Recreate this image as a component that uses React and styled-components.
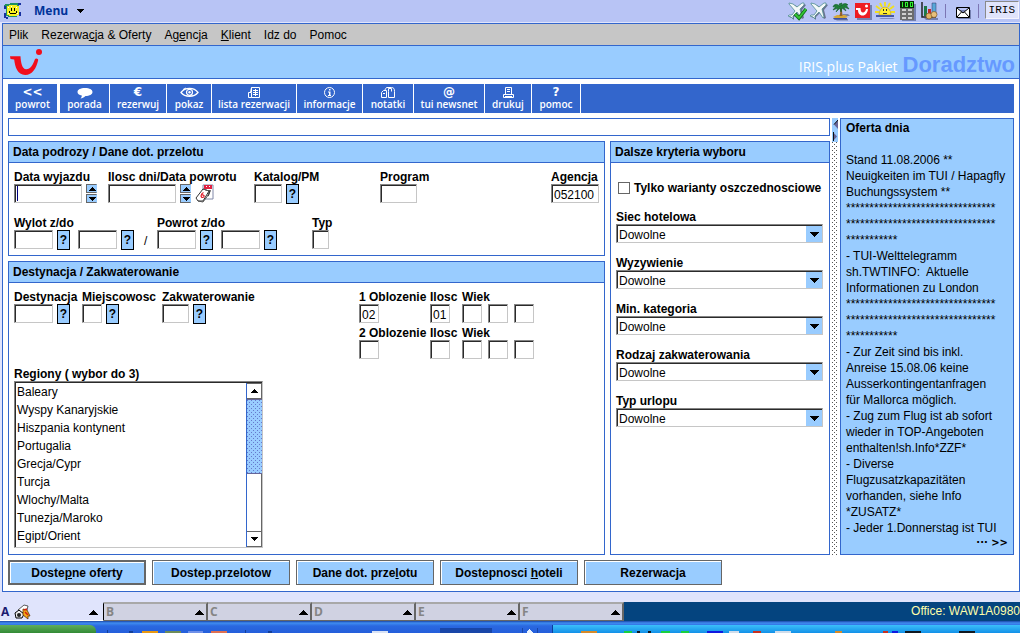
import React from "react";
import styled, { createGlobalStyle, css } from "styled-components";

const c = {
  line: "#3366cc",
  sky: "#99ccff",
  pale: "#e0e4fc",
  lilac: "#b8c4f5",
  grey: "#c6c6c6",
  dark: "#666666",
};

const Global = createGlobalStyle`
  *, *::before, *::after { box-sizing: border-box; }
  html, body { margin: 0; background: ${c.pale}; }
  body, button, input, select {
    font: 12px/14px "Liberation Sans", Arial, sans-serif;
    color: #000;
  }
  button { padding: 0; margin: 0; border: 0; border-radius: 0; cursor: pointer; }
  svg { display: block; flex: none; }
`;

const Page = styled.div`
  min-height: 100vh;
  display: flex;
  flex-direction: column;
`;

/* ---- top bar ---- */

const TopBar = styled.header`
  height: 23px;
  display: flex;
  align-items: center;
  justify-content: space-between;
  background: ${c.lilac};
  border-bottom: 1px solid ${c.pale};
  padding-left: 3px;
`;

const MenuButton = styled.button`
  display: flex;
  align-items: center;
  gap: 8px;
  background: none;
  color: #003399;
  font: bold 12px/16px "Open Sans", sans-serif;
`;

const MenuLabel = styled.span`
  padding-left: 4px;
`;

const Tools = styled.div`
  display: flex;
  align-items: center;
  gap: 2px;
`;

const ToolButton = styled.button`
  width: 20px;
  height: 20px;
  background: none;
`;

const ToolDivider = styled.span`
  width: 1px;
  height: 14px;
  margin: 0 4px;
  background: #7c76b4;
`;

const IrisBox = styled.span`
  height: 18px;
  margin-bottom: 2px;
  margin-right: 1px;
  padding: 0 3px;
  border: 1px solid;
  border-color: #8a8a8a #f4f4ff #f4f4ff #8a8a8a;
  background: ${c.pale};
  font: 11px/16px "Liberation Mono", monospace;
`;

/* ---- application window ---- */

const Window = styled.div`
  margin-left: 2px;
  border: 1px solid ${c.line};
  background: #fff;
`;

const MenuBar = styled.nav`
  height: 22px;
  display: flex;
  align-items: center;
  gap: 13px;
  padding-left: 6px;
  background: ${c.grey};
  border-bottom: 1px solid ${c.line};
`;

const MenuItem = styled.a`
  color: #000;
  text-decoration: none;
`;

const Banner = styled.div`
  height: 33px;
  display: flex;
  align-items: center;
  justify-content: space-between;
  padding: 0 4px 0 7px;
  background: ${c.sky};
  border-bottom: 1px solid ${c.line};
`;

const Product = styled.div`
  display: flex;
  align-items: baseline;
  gap: 5px;
  padding-top: 8px;
  color: #fff;
  font: 14px/24px "Open Sans", sans-serif;
`;

const Module = styled.strong`
  color: #6699ff;
  font: bold 22px/24px "Liberation Sans", Arial, sans-serif;
`;

const Content = styled.div`
  display: grid;
  gap: 5px;
  padding: 5px 5px 6px;
`;

const Toolbar = styled.div`
  height: 29px;
  display: flex;
  background: ${c.line};
`;

const Action = styled.button`
  flex: 0 0 ${(p) => p.$width}px;
  display: flex;
  flex-direction: column;
  align-items: center;
  justify-content: space-between;
  padding: 2px 0 3px;
  background: ${c.line};
  border-right: ${(p) => (p.$wide ? 3 : 1)}px solid #fff;
  color: #fff;
  font: 600 10px/11px "Open Sans", sans-serif;
  white-space: nowrap;
`;

const Glyph = styled.span`
  height: 13px;
  font: bold 12px/12px "DejaVu Sans", sans-serif;
`;

const Columns = styled.div`
  display: grid;
  grid-template-columns: minmax(0, 1fr) 6px 174px;
  gap: 2px;
`;

const Work = styled.div`
  display: grid;
  grid-template-columns: minmax(0, 1fr) 220px;
  gap: 5px;
`;

const Message = styled.div`
  grid-column: 1 / -1;
  height: 18px;
  border: 1px solid ${c.line};
`;

const Stack = styled.div`
  display: grid;
  gap: 5px;
`;

const Panel = styled.section`
  border: 1px solid ${c.line};
`;

const PanelTitle = styled.h2`
  margin: 0;
  padding: 0 4px;
  font-size: 12px;
  line-height: 20px;
  background: ${c.sky};
  border-bottom: 1px solid ${c.line};
`;

const PanelBody = styled.div`
  display: grid;
  gap: ${(p) => p.$gap || 0}px;
  padding: 7px 5px 5px;
`;

const FieldRow = styled.div`
  display: flex;
  align-items: flex-start;
`;

const Field = styled.div`
  width: ${(p) => (p.$width ? p.$width + "px" : "auto")};
  margin-left: ${(p) => (p.$end ? "auto" : 0)};
`;

const Label = styled.label`
  display: block;
  height: 14px;
  font-weight: bold;
  white-space: nowrap;
`;

const Controls = styled.div`
  display: flex;
  gap: 4px;
  height: 20px;
`;

const Slot = styled.span`
  display: flex;
  padding-left: 2px;
`;

const sunken = css`
  border: 1px solid;
  border-color: #848484 ${c.grey} ${c.grey} #848484;
  box-shadow: inset 1px 1px 0 #2a2a2a;
  background-color: #fff;
`;

const TextBox = styled.input`
  ${sunken}
  width: ${(p) => p.$width}px;
  height: 19px;
  padding: 2px 0 0 2px;
  outline: 0;
  border-radius: 0;
  ${(p) =>
    p.$caret &&
    css`
      background: linear-gradient(#000080, #000080) 2px 1px / 1px 15px no-repeat #fff;
    `}
`;

const HelpButton = styled.button`
  width: 13px;
  height: 20px;
  margin-right: ${(p) => (p.$spaced ? 4 : 0)}px;
  border: 1px solid #000;
  background: ${c.sky};
  font-weight: bold;
`;

const Slash = styled.span`
  padding: 4px 0 0 6px;
`;

const Spinner = styled.div`
  display: grid;
  gap: 1px;
  height: 19px;
`;

const SpinButton = styled.button`
  width: 11px;
  height: 9px;
  display: grid;
  place-items: center;
  border: 1px solid ${c.dark};
  border-right-color: ${c.sky};
  background: ${c.sky};
`;

const IconButton = styled.button`
  height: 19px;
  background: none;
`;

const Destination = styled.div`
  display: grid;
  grid-template-columns: 345px 1fr;
`;

const Occupancy = styled.div`
  display: grid;
  align-content: start;
  gap: 2px;
`;

const Regions = styled.div`
  padding: 43px 0 1px;
`;

const ListFrame = styled.div`
  ${sunken}
  display: flex;
  width: 249px;
  height: 167px;
  padding: 1px 0 0 1px;
`;

const List = styled.select`
  flex: 1;
  min-width: 0;
  padding: 0;
  border: 0;
  border-radius: 0;
  outline: 0;
  overflow: hidden;
  background: transparent;

  option {
    height: 18px;
    min-height: 18px;
    padding: 2px 0 0 1px;
    line-height: 16px;
  }
`;

const dots = (color) => css`
  background-image: conic-gradient(at 1px 1px, transparent 75%, ${color} 0),
    conic-gradient(at 1px 1px, transparent 75%, ${color} 0);
  background-size: 4px 4px;
  background-position: 0 0, 2px 2px;
`;

const ScrollBar = styled.div`
  width: 16px;
  display: flex;
  flex-direction: column;
  border-left: 1px solid ${c.line};
`;

const ScrollButton = styled.button`
  height: 16px;
  display: grid;
  place-items: center;
  border: 1px solid ${c.dark};
  border-left: 0;
  background: #fff;
`;

const Thumb = styled.div`
  height: 75px;
  border-bottom: 1px solid #666699;
  border-top: 1px solid #666699;
  background-color: ${c.sky};
  ${dots("#6678cc")}
`;

const Track = styled.div`
  flex: 1;
  border-right: 1px solid ${c.dark};
`;

const CheckRow = styled.label`
  display: flex;
  align-items: center;
  gap: 4px;
  height: 14px;
  margin: 11px 0 15px 2px;
  font-weight: bold;
  white-space: nowrap;
`;

const CheckBox = styled.input`
  appearance: none;
  width: 12px;
  height: 12px;
  margin: 0;
  border: 1px solid ${c.dark};
  background: #fff;
  &:checked { background: ${c.line}; }
`;

const Criteria = styled.div`
  display: grid;
  gap: 13px;
`;

const SelectFrame = styled.div`
  ${sunken}
  display: grid;
  grid-template-columns: 1fr 16px;
  height: 19px;
  margin-right: 1px;
`;

const Select = styled.select`
  grid-area: 1 / 1 / 2 / 3;
  appearance: none;
  padding: 2px 18px 0 2px;
  border: 0;
  outline: 0;
  background: transparent;
`;

const SelectArrow = styled.span`
  grid-area: 1 / 2;
  display: grid;
  place-items: center;
  margin-top: 1px;
  background: ${c.sky};
  pointer-events: none;
`;

const Divider = styled.div`
  display: flex;
  flex-direction: column;
`;

const DividerArrows = styled.div`
  height: 24px;
  display: grid;
  align-content: space-around;
  justify-items: end;
  background: ${c.sky};
`;

const DividerGrip = styled.div`
  flex: 1;
  ${dots("#555555")}
`;

const News = styled.aside`
  border: 1px solid ${c.line};
  background: ${c.sky};
  padding: 1px 5px 4px;
  overflow: hidden;
`;

const NewsTitle = styled.h2`
  margin: 0 0 16px;
  font-size: 12px;
  line-height: 16px;
`;

const NewsText = styled.p`
  margin: 0;
  line-height: 16px;
  white-space: pre;
`;

const More = styled.a`
  display: block;
  height: 14px;
  color: #000;
  text-align: right;
  text-decoration: none;
  font: bold 10px/14px "DejaVu Sans", sans-serif;
`;

const Buttons = styled.div`
  display: flex;
  gap: 6px;
`;

const CommandButton = styled.button`
  width: 138px;
  height: 25px;
  border: 1px solid ${c.dark};
  border-width: ${(p) => (p.$default ? "2px" : "1px")};
  box-shadow: inset 1px 1px 0 #fff;
  background: ${c.sky};
  font-weight: bold;
`;

/* ---- session tabs and desktop bar ---- */

const Tabs = styled.div`
  display: flex;
  margin-top: 10px;
  height: 19px;
  background: #04447f;
`;

const Tab = styled.button`
  flex: 0 0 104px;
  display: flex;
  align-items: center;
  gap: 5px;
  padding: 0 2px;
  background: #d0d2e2;
  border-top: 2px solid #a8a8a8;
  border-right: 2px solid ${c.dark};
  border-bottom: 1px solid ${c.dark};
  color: #858585;
  font: bold 12px/14px "Open Sans", sans-serif;

  svg:last-child { margin-left: auto; }

  ${(p) =>
    p.$active &&
    css`
      padding: 0 5px 0 1px;
      background: ${c.pale};
      border-color: ${c.pale} #000 #fff;
      border-right-width: 1px;
      color: #1a1a70;
    `}
`;

const Office = styled.span`
  margin-left: auto;
  color: #ffffaa;
  line-height: 19px;
`;

const TaskBar = styled.footer`
  flex: 1;
  min-height: 12px;
  display: flex;
  align-items: flex-end;
  overflow: hidden;
  background: linear-gradient(#1b48a8 0, #3f8cf0 2px, #2a68e0 5px, #245edb 12px);
`;

const Start = styled.div`
  width: 96px;
  height: 8px;
  border-radius: 0 6px 0 0;
  background: linear-gradient(#5fae5c, #338a35);
`;

const Tray = styled.div`
  flex: 1;
  height: 8px;
  border-left: 1px solid #0b3f9c;
  background: linear-gradient(#3cc0fa, #1290e8);
`;

/* ---- drawings ---- */

const Triangle = ({ w = 10, h = 5, down }) => (
  <svg width={w} height={h} viewBox="0 0 10 5" preserveAspectRatio="none" shapeRendering="crispEdges">
    <path d={down ? "M0 0h10L5 5z" : "M0 5h10L5 0z"} fill="#000" />
  </svg>
);

const Smiley = () => (
  <svg width="19" height="17" viewBox="0 0 19 17" shapeRendering="crispEdges">
    <path d="M2 1h5V0h8v1h1v3h-1v7h-1v3H5v-1H3V4H1V2z" fill="#209060" />
    <path d="M1 3h2v3H1zM1 10h2v5H1zM16 9h2v4h-2zM15 0h3v2h-3zM3 14h2v2H3z" fill="#1830a0" />
    <path d="M6 2h8v1h2v9h-2v1H6v-1H4V3h2z" fill="#f8f020" />
    <path d="M5 4h1v1H5zM8 3h1v1H8zM13 4h1v1h-1zM5 10h1v1H5zM14 10h1v1h-1z" fill="#fff" />
    <path d="M8 5h1v3H8zM11 5h1v3h-1zM6 8h1v2H6zM7 10h6v1H7zM13 8h1v2h-1z" fill="#000" />
  </svg>
);

const TuiLogo = () => (
  <svg width="34" height="28" viewBox="0 0 34 28">
    <circle cx="29" cy="4" r="3" fill="#f10e1c" />
    <path d="M0 8.3h10.5c.3 6 1.6 13 5.7 13 4.300 0 7-5 8.600-9.800.7-1.600 3.900-1 3.300 1C26.300 20 22.500 27 15.200 27 7.500 27 5 19 4.200 11.600L.5 11z" fill="#f10e1c" />
  </svg>
);

const Plane = ({ check }) => (
  <svg width="20" height="20" viewBox="0 0 20 20">
    <path d="M4 4l4 0 4 3 5-4 2 1-4 5 2 8-2 1-4-6-4 4 0 3-2-2-3-1 1-1 3-1 4-4-6-5z" fill="#6b7390" />
    <path d="M2 2l4 1 4 3 5-4 2 0 0 2-4 4 2 8-1 1-4-6-4 4 0 3-2-2-3-1 1-1 3 0 3-4-6-7z" fill="#f4f8f8" stroke="#4f8d92" strokeWidth=".8" />
    {check && <path d="M8 13l4 4 7-9" fill="none" stroke="#107018" strokeWidth="3.500" />}
    {check && <path d="M8 13l4 4 7-9" fill="none" stroke="#35c735" strokeWidth="1.800" />}
  </svg>
);

const Palm = () => (
  <svg width="20" height="20" viewBox="0 0 20 20">
    <path d="M3 18h14v1.500H6zM11 13h6l2 2h-6z" fill="#7882a8" />
    <path d="M2 16l4-2h8l3 2-3 1H4z" fill="#d6a83a" />
    <path d="M2 17h14v1.500H3z" fill="#3c50a0" />
    <path d="M8.500 6h2.200l.8 9H8.500l.8-4z" fill="#93602a" />
    <path d="M9 6C6 2 3 3 2 6l3-1-3 4 5-2-2 4 4-4 1 4 1-4 4 3-2-4 5 2-3-4 2 0C15 2 12 2 10.500 5L11 2 8 3z" fill="#1e8038" stroke="#125c28" strokeWidth=".6" />
  </svg>
);

const TuiTile = () => (
  <svg width="20" height="20" viewBox="0 0 20 20">
    <path d="M4 4h15v15H4z" fill="#7480b0" />
    <path d="M2 2h15v15H2z" fill="#ee1c24" />
    <circle cx="13.500" cy="5" r="1.500" fill="#fff" />
    <path d="M3 7h4.500c0 3 1 4.500 2.500 4.500S12.500 10 13 8h2c-.5 4-2.500 6.500-5.300 6.500C6.500 14.500 5 12 5 9H3z" fill="#fff" />
  </svg>
);

const Sun = () => (
  <svg width="20" height="20" viewBox="0 0 20 20">
    <path d="M10 1v4M5 2l2 4M15 2l-2 4M1 5l4 3M19 5l-4 3M0 11h4M20 11h-4" stroke="#f2e01c" strokeWidth="1.800" />
    <path d="M4 14a6 8 0 0 1 12 0z" fill="#ffee30" stroke="#c09a10" strokeWidth=".6" />
    <path d="M8 8h1v2H8zM11 8h1v2h-1zM8 12h4v1H8z" fill="#333" />
    <path d="M1 14h18v2H1z" fill="#4658a8" />
    <path d="M4 17h14l2 1H6z" fill="#7e8ac0" />
  </svg>
);

const Calculator = () => (
  <svg width="20" height="20" viewBox="0 0 20 20" shapeRendering="crispEdges">
    <path d="M5 3h14v17H5z" fill="#7480b0" />
    <path d="M3 0h14v19H3z" fill="#6c6c6c" />
    <path d="M3 0h14v7H3z" fill="#062806" />
    <path d="M5 1h1v5H5zM8 1h3v5H8zM13 1h3v5h-3z" fill="#30f030" />
    <path d="M9 2h1v3H9zM14 2h1v3h-1z" fill="#062806" />
    <path d="M5 8h4v2H5zM11 8h4v2h-4zM5 12h4v2H5zM11 12h4v2h-4zM5 16h4v2H5zM11 16h4v2h-4z" fill="#cfcfcf" />
  </svg>
);

const Chart = () => (
  <svg width="20" height="20" viewBox="0 0 20 20">
    <path d="M5 17h14v2H7z" fill="#7480b0" />
    <path d="M3 1v15h14" fill="none" stroke="#222" strokeWidth="1.500" />
    <path d="M5 5h3v10H5z" fill="#1e7a46" />
    <path d="M9 8h3v7H9z" fill="#c62828" />
    <path d="M13 2h4v12h-4z" fill="#58a8d8" stroke="#336" strokeWidth=".5" />
    <circle cx="10" cy="15" r="3" fill="#e0b468" stroke="#7c5420" strokeWidth=".7" />
    <circle cx="15" cy="13.500" r="3" fill="#e8c07c" stroke="#7c5420" strokeWidth=".7" />
  </svg>
);

const Envelope = () => (
  <svg width="20" height="20" viewBox="0 0 20 20">
    <path d="M6 9h13v9H6z" fill="#7480b0" />
    <path d="M4.500 6.500h13v10h-13zM5 7l6 5L17 7M5 16l4.500-5M17 16l-4.500-5" fill="#fff" stroke="#000" />
  </svg>
);

const Speech = () => (
  <svg width="18" height="13" viewBox="0 0 18 13">
    <path d="M9 2c4.500 0 7.500 1.600 7.500 4S13.500 10 9.500 10C8 11.500 6 12.500 4.500 12.500c1-1 1.300-1.800 1.300-2.900C3 9 1.500 7.700 1.500 6c0-2.400 3-4 7.500-4z" fill="#fff" />
  </svg>
);

const Eye = () => (
  <svg width="19" height="13" viewBox="0 0 19 13" fill="none" stroke="#fff">
    <path d="M1 6.500C5 1 14 1 18 6.500 14 11.500 5 11.500 1 6.500z" strokeWidth="1.300" />
    <circle cx="9.500" cy="6.300" r="3" strokeWidth="1.200" />
    <circle cx="9.500" cy="6.300" r="1.200" fill="#fff" stroke="none" />
    <path d="M3 3.500l3-1.500" />
  </svg>
);

const Listing = () => (
  <svg width="14" height="13" viewBox="0 0 14 13" fill="none" stroke="#fff">
    <path d="M4.500 6V1.500h8v10h-8M1.500 11.500v-5h3v5z" />
    <path d="M4.500 1.500l-1 5M6 4.500h5M6 6.500h5M6 8.500h5M8.500 3v7" />
  </svg>
);

const Info = () => (
  <svg width="13" height="13" viewBox="0 0 13 13">
    <circle cx="6.500" cy="6.500" r="5" fill="none" stroke="#fff" />
    <path d="M6 3h1.500v1.500H6zM5 5.500h2.500V9H8v1H5V9h1V6.500H5z" fill="#fff" />
  </svg>
);

const Mailbox = () => (
  <svg width="16" height="13" viewBox="0 0 16 13" fill="none" stroke="#fff">
    <path d="M1.500 11.500v-5l2-2h3v7zM8.500 11.500h6v-6c0-3-1-4-3-4h-5l-2 3" />
    <path d="M8.500 11.500v-6M8.500 5.500v-3h3v3M3 7.500h2" />
  </svg>
);

const Printer = () => (
  <svg width="13" height="13" viewBox="0 0 13 13" fill="none" stroke="#fff">
    <path d="M3.500 8V1.500h6V8M5 3.500h3M5 5.500h3M1.500 8.500h10v3h-10zM3 10.500h7" />
  </svg>
);

const Calendar = () => (
  <svg width="19" height="19" viewBox="0 0 19 19">
    <path d="M8 1h10v14H8z" fill="#fff" stroke="#8088a8" />
    <path d="M9 1h8v4H9z" fill="#e02040" />
    <path d="M11 2h1v1h-1zM14 2h1v1h-1z" fill="#fff" />
    <path d="M11 7h4l-2 5" fill="none" stroke="#222" strokeWidth="1.300" />
    <path d="M1 14L8 5l6 2-6 10-5 0z" fill="#fff" stroke="#333" />
    <path d="M8 5l6 2 0 3-6 8-5-1" fill="none" stroke="#555" />
    <path d="M8.500 8.500c-3 1.500-3 5-1 5s2.500-3-.5-2.500" fill="none" stroke="#e01828" strokeWidth="1.200" />
  </svg>
);

const Pointer = ({ left }) => (
  <svg width="5" height="9" viewBox="0 0 5 9">
    <path d={left ? "M5 0v9L1 4.500z" : "M0 0v9l4-4.500z"} fill="#666699" />
    <path d={left ? "M5 0L1 4.500" : "M.5 0v9"} stroke="#111" fill="none" />
  </svg>
);

const Bee = () => (
  <svg width="17" height="16" viewBox="0 0 17 16">
    <path d="M4 6l6-5 4 1-1 4-5 3z" fill="#fff" stroke="#333" strokeWidth=".8" />
    <path d="M1 9l4-3 5 4-2 4-6 0z" fill="#eee" stroke="#000" />
    <circle cx="5" cy="11" r="2" fill="#222" />
    <path d="M9 5l4 1 3 6-2 0 0 3-5-4z" fill="#f5a818" stroke="#5c3200" strokeWidth=".8" />
    <path d="M11 8l3 3M10 6l3-1" stroke="#d22010" strokeWidth="1.500" />
  </svg>
);

const Launchers = () => (
  <svg width="456" height="5" viewBox="0 0 456 5" shapeRendering="crispEdges">
    <path d="M46 3h16v2H46z" fill="#e8980f" />
    <path d="M69 3h16v2H69z" fill="#6d8c58" />
    <path d="M92 3h15v2H92z" fill="#6f90e8" />
    <path d="M115 3h16v2h-16z" fill="#e07050" />
    <path d="M11 2h1v3h-1zM149 2h1v3h-1zM172 3h4v2h-4zM33 3h4v2h-4z" fill="#123f98" />
    <path d="M276 3h16v2h-16z" fill="#d8e2f4" />
    <path d="M344 0h52v5h-52z" fill="#1846a8" />
    <path d="M430 4l3-3 4 3-1 1h-5z" fill="#e8f2ff" />
    <path d="M426 0h1v5h-1zM441 0h1v5h-1z" fill="#1846a8" />
  </svg>
);

const TrayIcons = () => (
  <svg width="440" height="8" viewBox="0 0 440 8" shapeRendering="crispEdges">
    <path d="M28 6h16v2H28zM282 6h7v2h-7z" fill="#d88a28" />
    <path d="M71 6h8v2h-8zM108 6h9v2h-9zM128 6h8v2h-8z" fill="#18d040" />
    <path d="M154 6h16v2h-16zM339 6h6v2h-6z" fill="#1018e0" />
    <path d="M176 6h10v2h-10zM222 6h16v2h-16z" fill="#d0dcea" />
    <path d="M84 6h3v2h-3zM95 6h3v2h-3zM352 6h16v2h-16zM406 6h16v2h-16z" fill="#101820" />
    <path d="M200 6h8v2h-8zM330 6h5v2h-5z" fill="#c83020" />
  </svg>
);

/* ---- data ---- */

const stars = "*".repeat(32);
const newsLines = [
  "Stand 11.08.2006 **",
  "Neuigkeiten im TUI / Hapagfly",
  "Buchungssystem **",
  stars,
  stars,
  "*".repeat(11),
  "- TUI-Welttelegramm",
  "sh.TWTINFO:  Aktuelle",
  "Informationen zu London",
  stars,
  stars,
  "*".repeat(11),
  "- Zur Zeit sind bis inkl.",
  "Anreise 15.08.06 keine",
  "Ausserkontingentanfragen",
  "für Mallorca möglich.",
  "- Zug zum Flug ist ab sofort",
  "wieder in TOP-Angeboten",
  "enthalten!sh.Info*ZZF*",
  "- Diverse",
  "Flugzusatzkapazitäten",
  "vorhanden, siehe Info",
  "*ZUSATZ*",
  "- Jeder 1.Donnerstag ist TUI",
];

const regions = [
  "Baleary",
  "Wyspy Kanaryjskie",
  "Hiszpania kontynent",
  "Portugalia",
  "Grecja/Cypr",
  "Turcja",
  "Wlochy/Malta",
  "Tunezja/Maroko",
  "Egipt/Orient",
];

const criteria = ["Siec hotelowa", "Wyzywienie", "Min. kategoria", "Rodzaj zakwaterowania", "Typ urlopu"];

const actions = [
  { name: "powrot", width: 52, wide: true, icon: <Glyph>&lt;&lt;</Glyph> },
  { name: "porada", width: 50, icon: <Speech /> },
  { name: "rezerwuj", width: 57, icon: <Glyph>€</Glyph> },
  { name: "pokaz", width: 45, icon: <Eye /> },
  { name: "lista rezerwacji", width: 85, icon: <Listing /> },
  { name: "informacje", width: 66, icon: <Info /> },
  { name: "notatki", width: 51, icon: <Mailbox /> },
  { name: "tui newsnet", width: 71, icon: <Glyph>@</Glyph> },
  { name: "drukuj", width: 47, icon: <Printer /> },
  { name: "pomoc", width: 49, icon: <Glyph>?</Glyph> },
];

const tools = [
  ["Lot potwierdzony", <Plane check />],
  ["Lot", <Plane />],
  ["Wypoczynek", <Palm />],
  ["TUI", <TuiTile />],
  ["Pogoda", <Sun />],
  ["Kalkulator", <Calculator />],
  ["Statystyka", <Chart />],
];

/* ---- composed parts ---- */

const Help = ({ of, spaced }) => (
  <HelpButton type="button" $spaced={spaced} aria-label={`Pomoc: ${of}`}>
    ?
  </HelpButton>
);

const Spin = () => (
  <Spinner>
    <SpinButton type="button" aria-label="Zwieksz">
      <Triangle w={8} h={4} />
    </SpinButton>
    <SpinButton type="button" aria-label="Zmniejsz">
      <Triangle w={8} h={4} down />
    </SpinButton>
  </Spinner>
);

const LabelledBox = ({ id, label, width, box, value, end, caret, children }) => (
  <Field $width={width} $end={end}>
    <Label htmlFor={id}>{label}</Label>
    <Controls>
      <TextBox id={id} $width={box} $caret={caret} defaultValue={value} />
      {children}
    </Controls>
  </Field>
);

const Room = ({ n, kind, count }) => (
  <FieldRow>
    <LabelledBox id={`room${n}`} label={`${n} Oblozenie`} width={71} box={20} value={kind} />
    <LabelledBox id={`count${n}`} label="Ilosc" width={32} box={20} value={count} />
    <Field>
      <Label htmlFor={`age${n}`}>Wiek</Label>
      <Controls>
        <TextBox id={`age${n}`} $width={20} />
        <Slot><TextBox aria-label="Wiek 2" $width={20} /></Slot>
        <Slot><TextBox aria-label="Wiek 3" $width={20} /></Slot>
      </Controls>
    </Field>
  </FieldRow>
);

export default function App() {
  return (
    <Page>
      <Global />
      <TopBar>
        <MenuButton type="button">
          <Smiley />
          <MenuLabel>Menu</MenuLabel>
          <Triangle w={8} h={4} down />
        </MenuButton>
        <Tools>
          {tools.map(([name, icon]) => (
            <ToolButton key={name} type="button" aria-label={name}>
              {icon}
            </ToolButton>
          ))}
          <ToolDivider />
          <ToolButton type="button" aria-label="Poczta">
            <Envelope />
          </ToolButton>
          <ToolDivider />
          <IrisBox>IRIS</IrisBox>
        </Tools>
      </TopBar>

      <Window>
        <MenuBar>
          <MenuItem href="#plik">Plik</MenuItem>
          <MenuItem href="#rezerwacja">Rezerwa<u>c</u>ja &amp; Oferty</MenuItem>
          <MenuItem href="#agencja">Ag<u>e</u>ncja</MenuItem>
          <MenuItem href="#klient"><u>K</u>lient</MenuItem>
          <MenuItem href="#idz">Idz do</MenuItem>
          <MenuItem href="#pomoc">Pomoc</MenuItem>
        </MenuBar>
        <Banner>
          <TuiLogo />
          <Product>
            IRIS.plus Pakiet <Module>Doradztwo</Module>
          </Product>
        </Banner>

        <Content>
          <Toolbar>
            {actions.map((a) => (
              <Action key={a.name} type="button" $width={a.width} $wide={a.wide}>
                {a.icon}
                {a.name}
              </Action>
            ))}
          </Toolbar>

          <Columns>
            <Work>
              <Message />
              <Stack>
                <Panel>
                  <PanelTitle>Data podrozy / Dane dot. przelotu</PanelTitle>
                  <PanelBody $gap={12}>
                    <FieldRow>
                      <LabelledBox id="departure" label="Data wyjazdu" width={94} box={68} caret>
                        <Spin />
                      </LabelledBox>
                      <LabelledBox id="days" label="Ilosc dni/Data powrotu" width={146} box={68}>
                        <Spin />
                        <IconButton type="button" aria-label="Kalendarz">
                          <Calendar />
                        </IconButton>
                      </LabelledBox>
                      <LabelledBox id="catalog" label="Katalog/PM" width={126} box={28}>
                        <Help of="Katalog" />
                      </LabelledBox>
                      <LabelledBox id="program" label="Program" box={37} />
                      <LabelledBox id="agency" label="Agencja" box={48} value="052100" end />
                    </FieldRow>
                    <FieldRow>
                      <LabelledBox id="outbound" label="Wylot z/do" width={143} box={39}>
                        <Help of="Wylot z" spaced />
                        <TextBox aria-label="Wylot do" $width={39} />
                        <Help of="Wylot do" />
                        <Slash>/</Slash>
                      </LabelledBox>
                      <LabelledBox id="inbound" label="Powrot z/do" width={155} box={39}>
                        <Help of="Powrot z" spaced />
                        <TextBox aria-label="Powrot do" $width={39} />
                        <Help of="Powrot do" />
                      </LabelledBox>
                      <LabelledBox id="type" label="Typ" box={17} />
                    </FieldRow>
                  </PanelBody>
                </Panel>

                <Panel>
                  <PanelTitle>Destynacja / Zakwaterowanie</PanelTitle>
                  <PanelBody>
                    <Destination>
                      <div>
                        <FieldRow>
                          <LabelledBox id="destination" label="Destynacja" width={68} box={39}>
                            <Help of="Destynacja" />
                          </LabelledBox>
                          <LabelledBox id="place" label="Miejscowosc" width={80} box={20}>
                            <Help of="Miejscowosc" />
                          </LabelledBox>
                          <LabelledBox id="lodging" label="Zakwaterowanie" box={27}>
                            <Help of="Zakwaterowanie" />
                          </LabelledBox>
                        </FieldRow>
                        <Regions>
                          <Label htmlFor="regions">Regiony ( wybor do 3)</Label>
                          <ListFrame>
                            <List id="regions" multiple size={9}>
                              {regions.map((r) => (
                                <option key={r}>{r}</option>
                              ))}
                            </List>
                            <ScrollBar>
                              <ScrollButton type="button" aria-label="W gore">
                                <Triangle w={8} h={4} />
                              </ScrollButton>
                              <Thumb />
                              <Track />
                              <ScrollButton type="button" aria-label="W dol">
                                <Triangle w={8} h={4} down />
                              </ScrollButton>
                            </ScrollBar>
                          </ListFrame>
                        </Regions>
                      </div>
                      <Occupancy>
                        <Room n={1} kind="02" count="01" />
                        <Room n={2} />
                      </Occupancy>
                    </Destination>
                  </PanelBody>
                </Panel>
              </Stack>

              <Panel>
                <PanelTitle>Dalsze kryteria wyboru</PanelTitle>
                <PanelBody>
                  <CheckRow>
                    <CheckBox type="checkbox" />
                    Tylko warianty oszczednosciowe
                  </CheckRow>
                  <Criteria>
                    {criteria.map((name) => (
                      <div key={name}>
                        <Label htmlFor={name}>{name}</Label>
                        <SelectFrame>
                          <Select id={name}>
                            <option>Dowolne</option>
                          </Select>
                          <SelectArrow>
                            <Triangle down />
                          </SelectArrow>
                        </SelectFrame>
                      </div>
                    ))}
                  </Criteria>
                </PanelBody>
              </Panel>
            </Work>

            <Divider>
              <DividerArrows>
                <Pointer left />
                <Pointer />
              </DividerArrows>
              <DividerGrip />
            </Divider>

            <News>
              <NewsTitle>Oferta dnia</NewsTitle>
              <NewsText>{newsLines.join("\n")}</NewsText>
              <More href="#more">··· &gt;&gt;</More>
            </News>
          </Columns>

          <Buttons>
            <CommandButton type="button" $default>Doste<u>p</u>ne oferty</CommandButton>
            <CommandButton type="button">Dostep.przelotow</CommandButton>
            <CommandButton type="button">Dane dot. prze<u>l</u>otu</CommandButton>
            <CommandButton type="button">Dostepnosci <u>h</u>oteli</CommandButton>
            <CommandButton type="button">Rezerwacja</CommandButton>
          </Buttons>
        </Content>
      </Window>

      <Tabs>
        <Tab type="button" $active>
          A
          <Bee />
          <Triangle />
        </Tab>
        {["B", "C", "D", "E", "F"].map((t) => (
          <Tab key={t} type="button">
            {t}
            <Triangle />
          </Tab>
        ))}
        <Office>Office: WAW1A0980</Office>
      </Tabs>
      <TaskBar>
        <Start />
        <Launchers />
        <Tray>
          <TrayIcons />
        </Tray>
      </TaskBar>
    </Page>
  );
}
